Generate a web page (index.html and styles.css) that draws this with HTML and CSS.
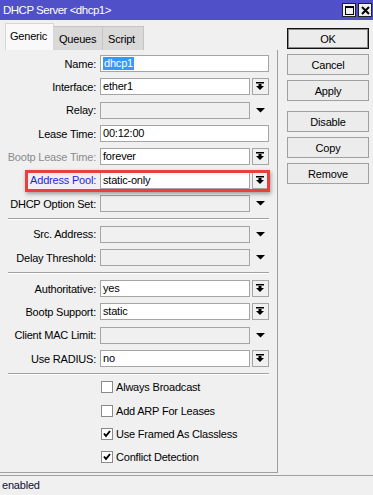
FILE: index.html
```html
<!DOCTYPE html>
<html>
<head>
<meta charset="utf-8">
<link rel="stylesheet" href="styles.css">
</head>
<body>
<div class="window">
  <div class="titlebar">
    <span class="title">DHCP Server &lt;dhcp1&gt;</span>
    <div class="tb-btns">
      <div class="tb-btn"><svg width="11" height="11" viewBox="0 0 11 11"><rect x="1.5" y="1.5" width="8" height="8" fill="none" stroke="#000" stroke-width="1"/><rect x="1" y="1" width="9" height="2" fill="#000"/></svg></div>
      <div class="tb-btn"><svg width="11" height="11" viewBox="0 0 11 11"><path d="M2 2 L9 9 M9 2 L2 9" stroke="#000" stroke-width="2"/></svg></div>
    </div>
  </div>
  <div class="content">
    <div class="left">
      <div class="tabs">
        <div class="tab active">Generic</div>
        <div class="tab">Queues</div>
        <div class="tab">Script</div>
      </div>
      <div class="panel">
        <div class="section">
          <div class="row"><span class="lbl">Name:</span><div class="field"><div class="input"><span class="sel">dhcp1</span></div></div></div>
          <div class="row"><span class="lbl">Interface:</span><div class="field"><div class="input">ether1</div><div class="ddbtn"><svg width="15" height="15" viewBox="0 0 15 15"><rect x="3" y="3" width="8" height="1.5"/><rect x="5.5" y="5" width="3" height="2"/><polygon points="3,7 11,7 7,11"/></svg></div></div></div>
          <div class="row"><span class="lbl">Relay:</span><div class="field"><div class="input off"></div><div class="ddarrow"><svg width="17" height="17" viewBox="0 0 17 17"><polygon points="4,6 13,6 8.5,10.5"/></svg></div></div></div>
          <div class="row"><span class="lbl">Lease Time:</span><div class="field"><div class="input">00:12:00</div></div></div>
          <div class="row"><span class="lbl grey">Bootp Lease Time:</span><div class="field"><div class="input">forever</div><div class="ddbtn"><svg width="15" height="15" viewBox="0 0 15 15"><rect x="3" y="3" width="8" height="1.5"/><rect x="5.5" y="5" width="3" height="2"/><polygon points="3,7 11,7 7,11"/></svg></div></div></div>
          <div class="row"><span class="lbl blue">Address Pool:</span><div class="field"><div class="input">static-only</div><div class="ddbtn"><svg width="15" height="15" viewBox="0 0 15 15"><rect x="3" y="3" width="8" height="1.5"/><rect x="5.5" y="5" width="3" height="2"/><polygon points="3,7 11,7 7,11"/></svg></div></div></div>
          <div class="row"><span class="lbl">DHCP Option Set:</span><div class="field"><div class="input off"></div><div class="ddarrow"><svg width="17" height="17" viewBox="0 0 17 17"><polygon points="4,6 13,6 8.5,10.5"/></svg></div></div></div>
        </div>
        <div class="sep"></div>
        <div class="section">
          <div class="row"><span class="lbl">Src. Address:</span><div class="field"><div class="input off"></div><div class="ddarrow"><svg width="17" height="17" viewBox="0 0 17 17"><polygon points="4,6 13,6 8.5,10.5"/></svg></div></div></div>
          <div class="row"><span class="lbl">Delay Threshold:</span><div class="field"><div class="input off"></div><div class="ddarrow"><svg width="17" height="17" viewBox="0 0 17 17"><polygon points="4,6 13,6 8.5,10.5"/></svg></div></div></div>
        </div>
        <div class="sep"></div>
        <div class="section">
          <div class="row"><span class="lbl">Authoritative:</span><div class="field"><div class="input">yes</div><div class="ddbtn"><svg width="15" height="15" viewBox="0 0 15 15"><rect x="3" y="3" width="8" height="1.5"/><rect x="5.5" y="5" width="3" height="2"/><polygon points="3,7 11,7 7,11"/></svg></div></div></div>
          <div class="row"><span class="lbl">Bootp Support:</span><div class="field"><div class="input">static</div><div class="ddbtn"><svg width="15" height="15" viewBox="0 0 15 15"><rect x="3" y="3" width="8" height="1.5"/><rect x="5.5" y="5" width="3" height="2"/><polygon points="3,7 11,7 7,11"/></svg></div></div></div>
          <div class="row"><span class="lbl">Client MAC Limit:</span><div class="field"><div class="input off"></div><div class="ddarrow"><svg width="17" height="17" viewBox="0 0 17 17"><polygon points="4,6 13,6 8.5,10.5"/></svg></div></div></div>
          <div class="row"><span class="lbl">Use RADIUS:</span><div class="field"><div class="input">no</div><div class="ddbtn"><svg width="15" height="15" viewBox="0 0 15 15"><rect x="3" y="3" width="8" height="1.5"/><rect x="5.5" y="5" width="3" height="2"/><polygon points="3,7 11,7 7,11"/></svg></div></div></div>
        </div>
        <div class="sep"></div>
        <div class="section checks">
          <div class="row"><span class="cb"></span><span class="cbl">Always Broadcast</span></div>
          <div class="row"><span class="cb"></span><span class="cbl">Add ARP For Leases</span></div>
          <div class="row"><span class="cb"><svg width="10" height="10" viewBox="0 0 10 10"><path d="M2 4.5 L4 7 L8 2" fill="none" stroke="#000" stroke-width="2"/></svg></span><span class="cbl">Use Framed As Classless</span></div>
          <div class="row"><span class="cb"><svg width="10" height="10" viewBox="0 0 10 10"><path d="M2 4.5 L4 7 L8 2" fill="none" stroke="#000" stroke-width="2"/></svg></span><span class="cbl">Conflict Detection</span></div>
        </div>
        <div class="highlight"></div>
      </div>
    </div>
    <div class="actions">
      <div class="btn default">OK</div>
      <div class="btn">Cancel</div>
      <div class="btn">Apply</div>
      <div class="btn spaced">Disable</div>
      <div class="btn">Copy</div>
      <div class="btn">Remove</div>
    </div>
  </div>
  <div class="status">enabled</div>
</div>
</body>
</html>
```
FILE: styles.css
```css
* { box-sizing: border-box; }
html, body { margin: 0; padding: 0; }
body {
  background: #f0f0f0;
  font-family: "Liberation Sans", Arial, sans-serif;
  font-size: 11px;
  letter-spacing: -0.2px;
  color: #000;
}
.window { width: 373px; height: 495px; display: flex; flex-direction: column; }
.titlebar {
  height: 20px;
  background: #5050c8;
  display: flex;
  align-items: center;
  justify-content: space-between;
  padding: 0 1px 0 3px;
}
.title { color: #fff; font-size: 11.5px; letter-spacing: -0.5px; }
.tb-btns { display: flex; gap: 2px; }
.tb-btn {
  width: 14px; height: 14px;
  background: #f0f0f0;
  border: 1px solid #202020;
  display: flex; align-items: center; justify-content: center;
}
.content { display: flex; flex: 1; }
.left { width: 278px; display: flex; flex-direction: column; }
.tabs { display: flex; height: 30px; padding: 3px 0 0 5px; align-items: flex-end; }
.tab {
  height: 24px;
  background: #d9d9d9;
  border: 1px solid #c4c4c4;
  border-bottom: none;
  padding: 0 6px 0 5px;
  display: flex; align-items: center;
  margin-right: -1px;
}
.tab:nth-child(2) { width: 50px; }
.tab:nth-child(3) { width: 42px; }
.tab.active {
  height: 27px;
  width: 49px;
  background: #f9f9f9;
  border-color: #d6d6d6;
  padding: 0 4px 3px 4px;
  position: relative;
  z-index: 1;
}
.panel {
  position: relative;
  height: 423px;
  border-right: 1px solid #a0a0a0;
  border-bottom: 1px solid #a0a0a0;
  padding: 2px 8px 0 0;
}
.section { display: flex; flex-direction: column; }
.row { height: 23.33px; display: flex; align-items: center; }
.lbl { width: 96px; text-align: right; white-space: nowrap; flex-shrink: 0; }
.lbl.grey { color: #8c8c8c; }
.lbl.blue { color: #1f1fe0; }
.field { margin-left: 4px; flex: 1; display: flex; gap: 2px; height: 17px; }
.input {
  flex: 1;
  height: 17px;
  background: #fff;
  border: 1px solid #a5a5a5;
  padding: 0 2px;
  line-height: 15px;
  white-space: nowrap;
}
.input.off { background: #f0f0f0; }
.sel { background: #3399ff; color: #fff; padding: 0 1px; display: inline-block; line-height: 13px; margin-top: 1px; }
.ddbtn {
  width: 17px; height: 17px;
  border: 1px solid #a5a5a5;
  background: #f0f0f0;
  flex-shrink: 0;
}
.ddbtn svg { display: block; fill: #000; }
.ddarrow { width: 17px; height: 17px; flex-shrink: 0; }
.ddarrow svg { display: block; fill: #000; }
.sep {
  margin: 3px 0 2.5px 8px;
  height: 2px;
  border-top: 1px solid #a0a0a0;
  border-bottom: 1px solid #ffffff;
}
.checks { margin-top: -2px; }
.checks .row { padding-left: 101px; }
.cb {
  width: 12px; height: 12px;
  background: #fff;
  border: 1px solid #8a8a8a;
  display: flex; align-items: center; justify-content: center;
  flex-shrink: 0;
}
.cb svg { display: block; }
.cbl { margin-left: 3px; }
.highlight {
  position: absolute;
  left: 25px; top: 120px;
  width: 245px; height: 22px;
  border: 3px solid #e8403f;
  box-shadow: 1px 2px 4px rgba(0,0,0,0.35);
  pointer-events: none;
}
.actions {
  margin-left: 9px;
  padding-top: 8px;
  display: flex; flex-direction: column;
  gap: 5px;
}
.btn {
  width: 82px; height: 21px;
  border: 1px solid #a0a0a0;
  background: #ececec;
  display: flex; align-items: center; justify-content: center;
}
.btn.default { border: 1px solid #111; box-shadow: inset 0 0 0 1px #8a8a8a; }
.btn.spaced { margin-top: 5px; }
.status {
  margin-top: 2px;
  border-top: 1px solid #a0a0a0;
  height: 20px;
  padding: 3px 0 0 2px;
  color: #101030;
}
```
